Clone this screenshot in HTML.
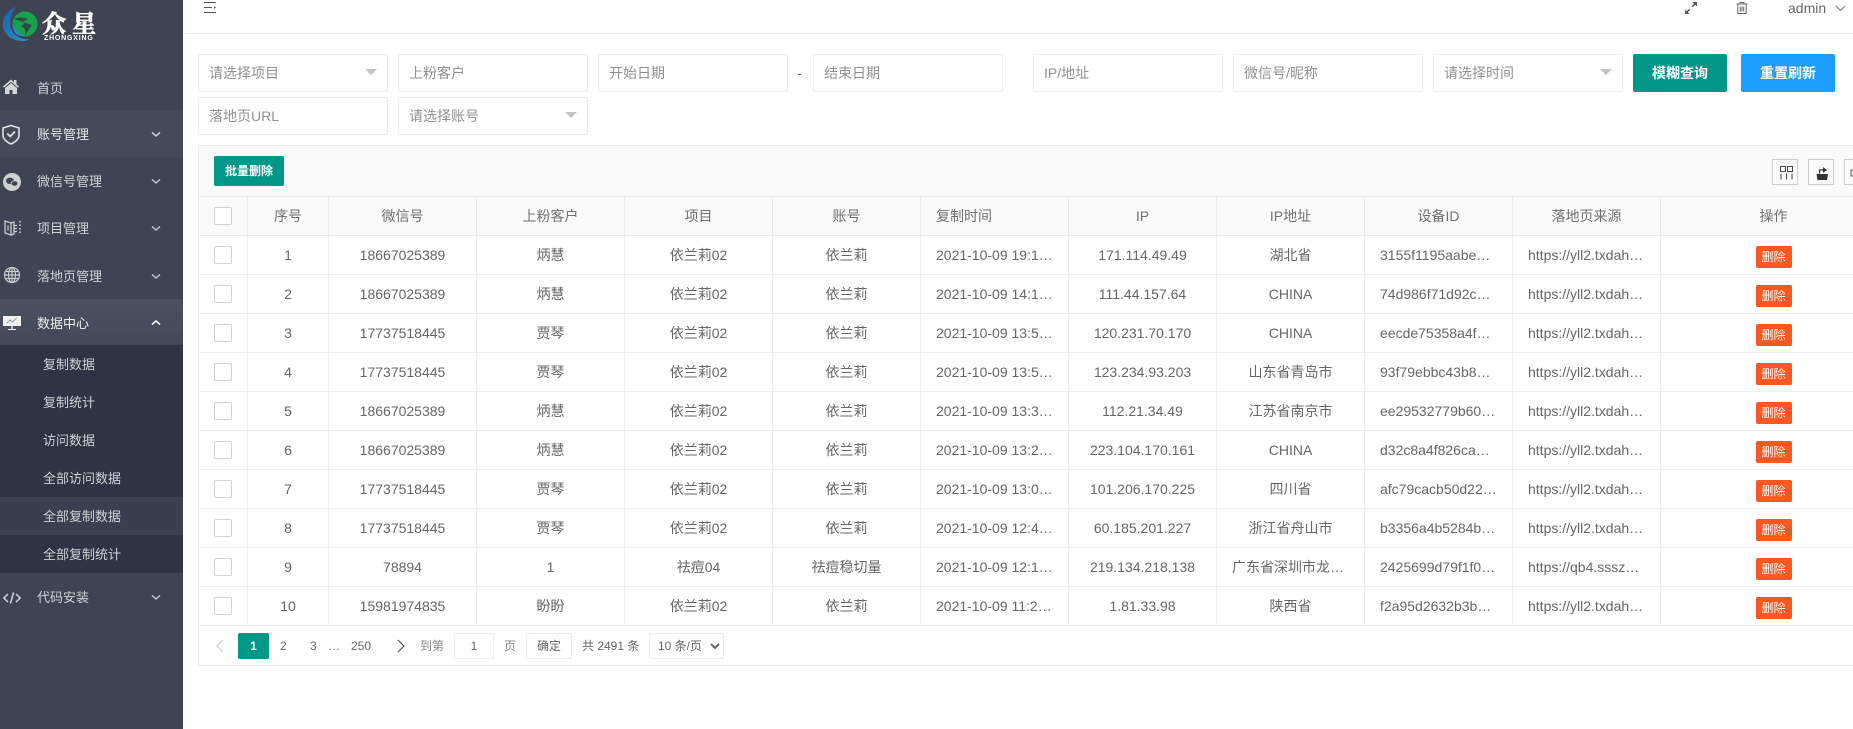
<!DOCTYPE html>
<html lang="zh-CN">
<head>
<meta charset="utf-8">
<title>众星 数据中心</title>
<style>
*{box-sizing:border-box}
html,body{margin:0;padding:0;width:1853px;height:729px;overflow:hidden;background:#fff}
body{position:relative;font-family:"Liberation Sans","Noto Sans CJK SC",sans-serif;font-size:14px;color:#666}
.abs{position:absolute}
#side{position:absolute;left:0;top:0;width:183px;height:729px;background:#3f4452;color:#d0d2d6;overflow:hidden}
.mi{position:absolute;left:0;width:183px;height:47px;line-height:50px;font-size:13px}
.mi span{position:absolute;left:37px;top:0}
.mi svg.ic{position:absolute;left:2px;top:12px}
.mi svg.ar{position:absolute;left:151px;top:21px}
.hov{background:#454a58;color:#e8e9eb}
.act{background:linear-gradient(#4b505e,#444957);color:#eff0f1}
#sub{position:absolute;left:0;top:345px;width:183px;height:228px;background:#2f3443}
.si{height:38px;line-height:39px;padding-left:43px;font-size:13px;color:#d0d2d6}
.si.on{background:#3b404e}
.f{position:absolute;height:38px;border:1px solid #eeeeee;border-radius:2px;line-height:36px;padding-left:10px;color:#909090;background:#fff;white-space:nowrap}
.tri{position:absolute;right:10px;top:14px;width:0;height:0;border-left:6px solid transparent;border-right:6px solid transparent;border-top:6px solid #c2c2c2}
.btn{position:absolute;top:54px;height:38px;width:94px;border-radius:2px;color:#fff;text-align:center;line-height:38px;font-weight:700}
#box{position:absolute;left:198px;top:145px;width:1655px;height:521px;border:1px solid #eeeeee;border-right:0;overflow:hidden}
#tool{position:absolute;left:0;top:0;width:100%;height:51px;background:#f9f9f9;border-bottom:1px solid #e9e9e9}
#batch{position:absolute;left:15px;top:10px;width:70px;height:30px;background:#009688;border-radius:2px;color:#fff;font-size:12px;font-weight:700;text-align:center;line-height:30px}
.tb{position:absolute;top:13px;width:26px;height:26px;border:1px solid #cccccc;background:#fafafa}
table{position:absolute;left:0;top:51px;width:1688px;table-layout:fixed;border-collapse:separate;border-spacing:0}
th,td{height:39px;padding:0 15px;border-right:1px solid #eeeeee;border-bottom:1px solid #eeeeee;text-align:center;font-weight:400;white-space:nowrap;overflow:hidden;text-overflow:ellipsis;color:#666;line-height:37px}
th{background:#fafafa;color:#707070;border-color:#e9e9e9}
th.l,td.l{text-align:left}
td.c,th.c{padding:0}
.cb{display:block;width:18px;height:18px;margin-left:15px;margin-top:0;border:1px solid #d2d2d2;border-radius:2px;background:#fff}
.del{display:inline-block;width:36px;height:22px;background:#ff5722;color:#fff;font-size:12px;line-height:22px;border-radius:2px;vertical-align:middle;margin-top:2px}
#pg{position:absolute;left:0;top:480px;width:100%;height:40px;font-size:12px;color:#666}
#pg .t{position:absolute;top:8px;line-height:24px;white-space:nowrap}
#pg .bx{position:absolute;top:7px;height:26px;border:1px solid #eeeeee;text-align:center;line-height:25px;border-radius:2px}
#pg select{position:absolute;left:450px;top:7px;width:75px;height:26px;border:1px solid #eeeeee;background:#fff;font:12px "Liberation Sans","Noto Sans CJK SC",sans-serif;color:#666;padding-left:4px;border-radius:2px}
</style>
</head>
<body>

<div id="side">
  <svg class="abs" style="left:2px;top:5px" width="40" height="38" viewBox="0 0 40 38">
    <defs>
      <linearGradient id="bl" x1="0" y1="0" x2="1" y2="1"><stop offset="0" stop-color="#1d5f9e"/><stop offset="1" stop-color="#2a93d5"/></linearGradient>
    </defs>
    <path d="M14 2C5 5 0 12 1 21c1 9 9 15 20 15 3 0 5-1 6-2-8 1-15-3-18-10C7 16 9 8 14 2z" fill="url(#bl)"/>
    <circle cx="23" cy="19" r="12.500" fill="#18a34a"/>
    <path d="M12 14c4-2 9-2 14 0l-5 3 9 3-7 10c1-4 0-7-4-9 2-1 3-2 3-3-3-2-7-3-10-4z" fill="#2f4a4a"/>
    <path d="M11 19c2 5 5 9 11 12-7 1-12-4-11-12z" fill="#2a88c8"/>
  </svg>
  <div class="abs" style="left:42px;top:7px;font:700 24px/30px 'Noto Serif CJK SC',serif;-webkit-text-stroke:.7px #fff;color:#fff;white-space:nowrap">众<span style="margin-left:6px">星</span></div>
  <div class="abs" style="left:44px;top:34px;font:700 7px/9px 'Liberation Sans',sans-serif;letter-spacing:.8px;color:#fff;white-space:nowrap">ZHONGXING</div>

  <div class="mi" style="top:64px">
    <svg class="ic" style="left:1px;top:11px" width="20" height="22" viewBox="0 0 20 22"><path d="M2 11.500 10 4.500l3 2.600V5h2.500v4.200L18 11.500l-1 1.200-7-6-7 6z" fill="#d4d5d8"/><path d="M4 13 10 8l6 5v6h-4.500v-4h-3v4H4z" fill="#d4d5d8"/></svg>
    <span>首页</span>
  </div>
  <div class="mi hov" style="top:110px">
    <svg class="ic" style="left:1px" width="20" height="24" viewBox="0 0 20 24" fill="none" stroke="#dfe0e3" stroke-width="1.600"><path d="M10 3.500 18 6v7c0 4.500-3.500 7-8 9-4.500-2-8-4.500-8-9V6z"/><path d="M6.200 11.500 9.200 14.500 14 9.500" stroke-width="1.800"/></svg>
    <span>账号管理</span>
    <svg class="ar" width="10" height="7" viewBox="0 0 10 7" fill="none" stroke="#ccced2" stroke-width="1.500"><path d="M1 1.500 5 5l4-3.500"/></svg>
  </div>
  <div class="mi" style="top:157px">
    <svg class="ic" style="top:14px" width="20" height="22" viewBox="0 0 20 22"><circle cx="10" cy="11" r="9" fill="#cfd0d4"/><ellipse cx="8" cy="9.800" rx="4" ry="3.200" fill="#3f4452"/><ellipse cx="12.500" cy="12.500" rx="3.400" ry="2.700" fill="#3f4452" stroke="#cfd0d4" stroke-width=".8"/></svg>
    <span>微信号管理</span>
    <svg class="ar" width="10" height="7" viewBox="0 0 10 7" fill="none" stroke="#b9bbc1" stroke-width="1.500"><path d="M1 1.500 5 5l4-3.500"/></svg>
  </div>
  <div class="mi" style="top:204px">
    <svg class="ic" width="20" height="22" viewBox="0 0 20 22" fill="none" stroke="#c9cbd0" stroke-width="1.300"><path d="M3 5 9 7v12l-6-2z"/><path d="M6 9.500v5M9 7l3-1v12l-3 1"/><path d="M12 9.500h3M12 12.500h3M12 15.500h3"/><path d="M18 5v1.500M18 8.500V10M18 12v1.500M18 15.500V17" stroke-width="1.600"/></svg>
    <span>项目管理</span>
    <svg class="ar" width="10" height="7" viewBox="0 0 10 7" fill="none" stroke="#b9bbc1" stroke-width="1.500"><path d="M1 1.500 5 5l4-3.500"/></svg>
  </div>
  <div class="mi" style="top:252px">
    <svg class="ic" style="top:11px" width="20" height="22" viewBox="0 0 20 22" fill="none" stroke="#c9cbd0" stroke-width="1.200"><circle cx="10" cy="12" r="7.500"/><ellipse cx="10" cy="12" rx="3.500" ry="7.500"/><path d="M2.500 12h15M3.500 8.500h13M3.500 15.500h13M10 4.500v15"/></svg>
    <span>落地页管理</span>
    <svg class="ar" width="10" height="7" viewBox="0 0 10 7" fill="none" stroke="#b9bbc1" stroke-width="1.500"><path d="M1 1.500 5 5l4-3.500"/></svg>
  </div>
  <div class="mi act" style="top:299px">
    <svg class="ic" width="20" height="24" viewBox="0 0 20 24"><path d="M1 5h18v10H1z" fill="#f0f1f2"/><path d="M5 12l3-3 2.500 2 4-4" fill="none" stroke="#8d919b" stroke-width=".9"/><path d="M9.300 15h1.400v3H9.300zM6 18h8v1H6z" fill="#f0f1f2"/></svg>
    <span>数据中心</span>
    <svg class="ar" style="top:20px" width="10" height="7" viewBox="0 0 10 7" fill="none" stroke="#eff0f1" stroke-width="1.700"><path d="M1 5.500 5 2l4 3.500"/></svg>
  </div>
  <div id="sub">
    <div class="si">复制数据</div>
    <div class="si">复制统计</div>
    <div class="si">访问数据</div>
    <div class="si">全部访问数据</div>
    <div class="si on">全部复制数据</div>
    <div class="si">全部复制统计</div>
  </div>
  <div class="mi" style="top:573px">
    <svg class="ic" style="top:14px" width="20" height="22" viewBox="0 0 20 22" fill="none" stroke="#d4d5d8" stroke-width="1.500"><path d="M6 7 1.800 11 6 15M14 7l4.200 4L14 15M11.500 5.500 8.500 16.500"/></svg>
    <span>代码安装</span>
    <svg class="ar" width="10" height="7" viewBox="0 0 10 7" fill="none" stroke="#b9bbc1" stroke-width="1.500"><path d="M1 1.500 5 5l4-3.500"/></svg>
  </div>
</div>

<!-- header -->
<div class="abs" style="left:183px;top:0;width:1670px;height:34px;background:#fff;border-bottom:1px solid #eeeeee"></div>
<svg class="abs" style="left:203px;top:1px" width="14" height="13" viewBox="0 0 14 13" fill="none" stroke="#555" stroke-width="1"><path d="M1 1.500h12M1 6.500h8M1 11.500h12"/><path d="M11 5v3l2-1.500z" fill="#555" stroke="none"/></svg>
<svg class="abs" style="left:1684px;top:1px" width="14" height="14" viewBox="0 0 14 14"><path d="M8.500 1H13V5.500L11.300 3.800 8.800 6.300 7.700 5.200 10.200 2.700zM5.500 13H1V8.500L2.700 10.200 5.200 7.700 6.300 8.800 3.800 11.300z" fill="#555"/></svg>
<svg class="abs" style="left:1736px;top:1px" width="12" height="14" viewBox="0 0 12 14" fill="none" stroke="#666" stroke-width="1"><path d="M.5 3h11M4 3V1.500h4V3M1.800 3v9.500h8.400V3M4.300 5.500v5M6 5.500v5M7.700 5.500v5"/></svg>
<div class="abs" style="left:1788px;top:0;line-height:17px;color:#666">admin</div>
<svg class="abs" style="left:1835px;top:5px" width="11" height="7" viewBox="0 0 11 7" fill="none" stroke="#777" stroke-width="1"><path d="M1 1l4.500 4.500L10 1"/></svg>

<!-- filters -->
<div class="f" style="left:198px;top:54px;width:190px">请选择项目<i class="tri"></i></div>
<div class="f" style="left:398px;top:54px;width:190px">上粉客户</div>
<div class="f" style="left:598px;top:54px;width:190px">开始日期</div>
<div class="abs" style="left:797px;top:54px;line-height:38px;color:#555">-</div>
<div class="f" style="left:813px;top:54px;width:190px">结束日期</div>
<div class="f" style="left:1033px;top:54px;width:190px">IP/地址</div>
<div class="f" style="left:1233px;top:54px;width:190px">微信号/昵称</div>
<div class="f" style="left:1433px;top:54px;width:190px">请选择时间<i class="tri"></i></div>
<div class="btn" style="left:1633px;background:#009688">模糊查询</div>
<div class="btn" style="left:1741px;background:#1e9fff">重置刷新</div>
<div class="f" style="left:198px;top:97px;width:190px">落地页URL</div>
<div class="f" style="left:398px;top:97px;width:190px">请选择账号<i class="tri"></i></div>

<!-- table -->
<div id="box">
  <div id="tool">
    <div id="batch">批量删除</div>
    <div class="tb" style="left:1573px"><svg width="24" height="24" viewBox="0 0 24 24" fill="none" stroke="#444" stroke-width="1"><path d="M7.500 6.500h5v5h-5zM14.500 6.500h5v5h-5zM8 13.500v6M13.500 13.500v6M19 13.500v6"/></svg></div>
    <div class="tb" style="left:1609px"><svg width="24" height="24" viewBox="0 0 24 24"><path d="M7.500 14h11.500l-1 6H8.500z" fill="#333"/><path d="M10.500 13.500V10h3.500" fill="none" stroke="#333" stroke-width="1.200"/><path d="M14 7l4 3-4 3z" fill="#333"/></svg></div>
    <div class="tb" style="left:1645px"><svg width="24" height="24" viewBox="0 0 24 24" fill="none" stroke="#555" stroke-width="1"><path d="M6 10h12v6H6z"/></svg></div>
  </div>
  <table>
    <colgroup><col style="width:49px"><col style="width:81px"><col style="width:148px"><col style="width:148px"><col style="width:148px"><col style="width:148px"><col style="width:148px"><col style="width:148px"><col style="width:148px"><col style="width:148px"><col style="width:148px"><col style="width:226px"></colgroup>
    <thead><tr><th class="c"><i class="cb"></i></th><th>序号</th><th>微信号</th><th>上粉客户</th><th>项目</th><th>账号</th><th class="l">复制时间</th><th>IP</th><th>IP地址</th><th>设备ID</th><th>落地页来源</th><th>操作</th></tr></thead>
    <tbody>
      <tr><td class="c"><i class="cb"></i></td><td>1</td><td>18667025389</td><td>炳慧</td><td>依兰莉02</td><td>依兰莉</td><td class="l">2021-10-09 19:12:45</td><td>171.114.49.49</td><td>湖北省</td><td>3155f1195aabe7c2d1f8</td><td>https://yll2.txdahong.cn/a</td><td><span class="del">删除</span></td></tr>
      <tr><td class="c"><i class="cb"></i></td><td>2</td><td>18667025389</td><td>炳慧</td><td>依兰莉02</td><td>依兰莉</td><td class="l">2021-10-09 14:16:23</td><td>111.44.157.64</td><td>CHINA</td><td>74d986f71d92c4a7e3b0</td><td>https://yll2.txdahong.cn/a</td><td><span class="del">删除</span></td></tr>
      <tr><td class="c"><i class="cb"></i></td><td>3</td><td>17737518445</td><td>贾琴</td><td>依兰莉02</td><td>依兰莉</td><td class="l">2021-10-09 13:58:11</td><td>120.231.70.170</td><td>CHINA</td><td>eecde75358a4f9c1d6b2</td><td>https://yll2.txdahong.cn/a</td><td><span class="del">删除</span></td></tr>
      <tr><td class="c"><i class="cb"></i></td><td>4</td><td>17737518445</td><td>贾琴</td><td>依兰莉02</td><td>依兰莉</td><td class="l">2021-10-09 13:52:07</td><td>123.234.93.203</td><td>山东省青岛市</td><td>93f79ebbc43b8a5e7d10</td><td>https://yll2.txdahong.cn/a</td><td><span class="del">删除</span></td></tr>
      <tr><td class="c"><i class="cb"></i></td><td>5</td><td>18667025389</td><td>炳慧</td><td>依兰莉02</td><td>依兰莉</td><td class="l">2021-10-09 13:34:50</td><td>112.21.34.49</td><td>江苏省南京市</td><td>ee29532779b60c4d8a1f</td><td>https://yll2.txdahong.cn/a</td><td><span class="del">删除</span></td></tr>
      <tr><td class="c"><i class="cb"></i></td><td>6</td><td>18667025389</td><td>炳慧</td><td>依兰莉02</td><td>依兰莉</td><td class="l">2021-10-09 13:27:31</td><td>223.104.170.161</td><td>CHINA</td><td>d32c8a4f826ca1b9e7d3</td><td>https://yll2.txdahong.cn/a</td><td><span class="del">删除</span></td></tr>
      <tr><td class="c"><i class="cb"></i></td><td>7</td><td>17737518445</td><td>贾琴</td><td>依兰莉02</td><td>依兰莉</td><td class="l">2021-10-09 13:05:18</td><td>101.206.170.225</td><td>四川省</td><td>afc79cacb50d22e8f4a1</td><td>https://yll2.txdahong.cn/a</td><td><span class="del">删除</span></td></tr>
      <tr><td class="c"><i class="cb"></i></td><td>8</td><td>17737518445</td><td>贾琴</td><td>依兰莉02</td><td>依兰莉</td><td class="l">2021-10-09 12:45:02</td><td>60.185.201.227</td><td>浙江省舟山市</td><td>b3356a4b5284bd7c09e1</td><td>https://yll2.txdahong.cn/a</td><td><span class="del">删除</span></td></tr>
      <tr><td class="c"><i class="cb"></i></td><td>9</td><td>78894</td><td>1</td><td>祛痘04</td><td>祛痘稳切量</td><td class="l">2021-10-09 12:13:44</td><td>219.134.218.138</td><td>广东省深圳市龙岗区</td><td>2425699d79f1f0a3c8e6</td><td>https://qb4.sssznn.cn/a</td><td><span class="del">删除</span></td></tr>
      <tr><td class="c"><i class="cb"></i></td><td>10</td><td>15981974835</td><td>盼盼</td><td>依兰莉02</td><td>依兰莉</td><td class="l">2021-10-09 11:26:39</td><td>1.81.33.98</td><td>陕西省</td><td>f2a95d2632b3b6c1e7f4</td><td>https://yll2.txdahong.cn/a</td><td><span class="del">删除</span></td></tr>
    </tbody>
  </table>
  <div id="pg">
    <svg class="abs" style="left:16px;top:13px" width="10" height="14" viewBox="0 0 10 14" fill="none" stroke="#d2d2d2" stroke-width="1.300"><path d="M8 1 2 7l6 6"/></svg>
    <div class="abs" style="left:39px;top:7px;width:31px;height:26px;background:#009688;color:#fff;border-radius:2px;text-align:center;line-height:26px;font-weight:700">1</div>
    <div class="t" style="left:81px">2</div>
    <div class="t" style="left:111px">3</div>
    <div class="t" style="left:129px">…</div>
    <div class="t" style="left:152px">250</div>
    <svg class="abs" style="left:197px;top:13px" width="10" height="14" viewBox="0 0 10 14" fill="none" stroke="#555" stroke-width="1.200"><path d="M2 1l6 6-6 6"/></svg>
    <div class="t" style="left:221px;color:#888">到第</div>
    <div class="bx" style="left:255px;width:40px">1</div>
    <div class="t" style="left:305px;color:#888">页</div>
    <div class="bx" style="left:327px;width:46px">确定</div>
    <div class="t" style="left:383px">共 2491 条</div>
    <select><option>10 条/页</option></select>
  </div>
</div>

</body>
</html>
